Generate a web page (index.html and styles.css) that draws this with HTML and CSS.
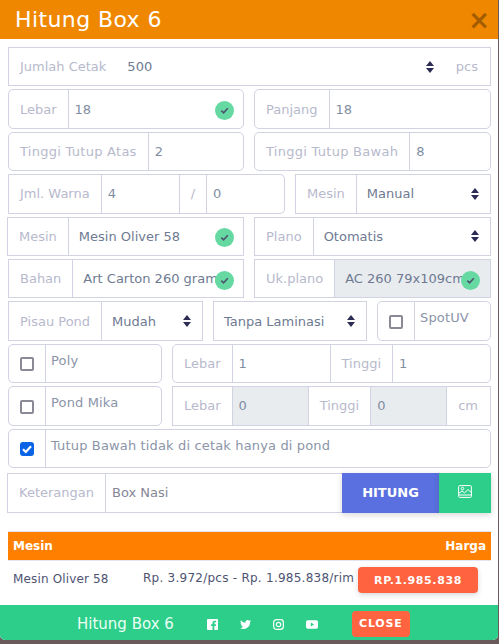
FILE: index.html
```html
<!DOCTYPE html>
<html lang="en">
<head>
  <meta charset="UTF-8">
  <meta name="viewport" content="width=device-width, initial-scale=1.0">
  <title>Hitung Box 6</title>
  <link rel="stylesheet" href="styles.css">
</head>
<body>
  <div class="modal">
    <div class="modal-header">
      <h5 class="modal-title">Hitung Box 6</h5>
      <span class="close-x">&times;</span>
    </div>

    <div class="modal-body">
      <div class="group square">
        <span class="addon flat">Jumlah Cetak</span>
        <div class="field select-field plain">500
          <svg class="updown" viewBox="0 0 8 12"><path d="M4 0 8 5H0zM0 7h8l-4 5z"/></svg>
        </div>
        <span class="addon end flat">pcs</span>
      </div>

      <div class="cols">
        <div class="group">
          <span class="addon">Lebar</span>
          <div class="field num">18
            <span class="ok"><svg viewBox="0 0 12 12"><path d="M2.5 6.2 5 8.6 9.6 3.6"/></svg></span>
          </div>
        </div>
        <div class="group">
          <span class="addon">Panjang</span>
          <div class="field num">18</div>
        </div>
      </div>

      <div class="cols">
        <div class="group">
          <span class="addon long">Tinggi Tutup Atas</span>
          <div class="field num">2</div>
        </div>
        <div class="group">
          <span class="addon long">Tinggi Tutup Bawah</span>
          <div class="field num">8</div>
        </div>
      </div>

      <div class="cols warna-row">
        <div class="group round-end">
          <span class="addon">Jml. Warna</span>
          <div class="field num">4</div>
          <span class="addon slash">/</span>
          <div class="field num">0</div>
        </div>
        <div class="group square">
          <span class="addon">Mesin</span>
          <div class="field select-field">Manual
            <svg class="updown" viewBox="0 0 8 12"><path d="M4 0 8 5H0zM0 7h8l-4 5z"/></svg>
          </div>
        </div>
      </div>

      <div class="cols">
        <div class="group square nudge">
          <span class="addon">Mesin</span>
          <div class="field select-field">Mesin Oliver 58
            <span class="ok"><svg viewBox="0 0 12 12"><path d="M2.5 6.2 5 8.6 9.6 3.6"/></svg></span>
          </div>
        </div>
        <div class="group square">
          <span class="addon">Plano</span>
          <div class="field select-field">Otomatis
            <svg class="updown" viewBox="0 0 8 12"><path d="M4 0 8 5H0zM0 7h8l-4 5z"/></svg>
          </div>
        </div>
      </div>

      <div class="cols">
        <div class="group square">
          <span class="addon">Bahan</span>
          <div class="field select-field">Art Carton 260 gram
            <span class="ok"><svg viewBox="0 0 12 12"><path d="M2.5 6.2 5 8.6 9.6 3.6"/></svg></span>
          </div>
        </div>
        <div class="group square">
          <span class="addon">Uk.plano</span>
          <div class="field select-field disabled">AC 260 79x109cm
            <span class="ok ok-far"><svg viewBox="0 0 12 12"><path d="M2.5 6.2 5 8.6 9.6 3.6"/></svg></span>
          </div>
        </div>
      </div>

      <div class="pisau-row">
        <div class="group square">
          <span class="addon">Pisau Pond</span>
          <div class="field select-field">Mudah
            <svg class="updown" viewBox="0 0 8 12"><path d="M4 0 8 5H0zM0 7h8l-4 5z"/></svg>
          </div>
        </div>
        <div class="group square">
          <div class="field select-field">Tanpa Laminasi
            <svg class="updown" viewBox="0 0 8 12"><path d="M4 0 8 5H0zM0 7h8l-4 5z"/></svg>
          </div>
        </div>
        <div class="group">
          <span class="addon check-cell"><span class="check"></span></span>
          <div class="field check-label">SpotUV</div>
        </div>
      </div>

      <div class="option-row">
        <div class="group">
          <span class="addon check-cell"><span class="check"></span></span>
          <div class="field check-label">Poly</div>
        </div>
        <div class="group">
          <span class="addon">Lebar</span>
          <div class="field num">1</div>
          <span class="addon">Tinggi</span>
          <div class="field num">1</div>
        </div>
      </div>

      <div class="option-row">
        <div class="group">
          <span class="addon check-cell"><span class="check"></span></span>
          <div class="field check-label">Pond Mika</div>
        </div>
        <div class="group square">
          <span class="addon">Lebar</span>
          <div class="field num disabled">0</div>
          <span class="addon">Tinggi</span>
          <div class="field num disabled">0</div>
          <span class="addon end">cm</span>
        </div>
      </div>

      <div class="group">
        <span class="addon check-cell">
          <span class="check checked"><svg viewBox="0 0 12 12"><path d="M2 6.200 4.800 9 10 3.200"/></svg></span>
        </span>
        <div class="field check-label">Tutup Bawah tidak di cetak hanya di pond</div>
      </div>

      <div class="group square note-row nudge">
        <span class="addon">Keterangan</span>
        <div class="field">Box Nasi</div>
        <div class="btn btn-hitung">HITUNG</div>
        <div class="btn btn-image">
          <svg viewBox="0 0 14 13"><rect x=".6" y=".6" width="12.8" height="11.8" rx="1"/><circle cx="4.500" cy="3.600" r="1.300"/><path d="M.6 8.600 4 6l2.600 1.800L10 4.600l3.400 3M.6 10h12.800"/></svg>
        </div>
      </div>

      <table class="result">
        <thead>
          <tr><th>Mesin</th><th class="right" colspan="2">Harga</th></tr>
        </thead>
        <tbody>
          <tr>
            <td class="name">Mesin Oliver 58</td>
            <td class="rate">Rp. 3.972/pcs - Rp. 1.985.838/rim</td>
            <td class="price-cell"><span class="price">RP.1.985.838</span></td>
          </tr>
        </tbody>
      </table>
    </div>

    <div class="modal-footer">
      <span class="footer-title">Hitung Box 6</span>
      <svg class="social" viewBox="0 0 12 12"><path d="M1 0h10a1 1 0 0 1 1 1v10a1 1 0 0 1-1 1H8V7.500h1.600L9.900 5.600H8V4.500c0-.6.2-.9.9-.9h1V1.900H8.600C6.900 1.900 6 2.900 6 4.300v1.300H4.400v1.900H6V12H1a1 1 0 0 1-1-1V1a1 1 0 0 1 1-1z"/></svg>
      <svg class="social" viewBox="0 0 14 12"><path d="M14 1.500c-.5.2-1 .4-1.600.5.600-.4 1-.9 1.200-1.600-.5.300-1.100.6-1.800.7A2.900 2.900 0 0 0 6.900 3.700C4.500 3.600 2.500 2.400 1.100.6c-.8 1.300-.4 3 .9 3.900-.5 0-.9-.1-1.300-.4 0 1.400 1 2.600 2.300 2.900-.4.100-.9.100-1.300 0 .4 1.200 1.500 2 2.700 2A5.800 5.800 0 0 1 .1 10.300 8.200 8.200 0 0 0 12.700 3c.5-.4 1-.9 1.300-1.500z"/></svg>
      <svg class="social insta" viewBox="0 0 12 12"><rect x=".7" y=".7" width="10.600" height="10.600" rx="3"/><circle cx="6" cy="6" r="2.400"/></svg>
      <svg class="social yt" viewBox="0 0 14 10"><path d="M2 0h10a2 2 0 0 1 2 2v6a2 2 0 0 1-2 2H2a2 2 0 0 1-2-2V2a2 2 0 0 1 2-2zm3.600 2.800v4.400L9.400 5z" fill-rule="evenodd"/></svg>
      <span class="btn-close">CLOSE</span>
    </div>
  </div>
</body>
</html>
```

FILE: styles.css
```css
* {
  box-sizing: border-box;
}

body {
  margin: 0;
  background: #6b5a5c;
  font-family: 'DejaVu Sans', Verdana, sans-serif;
  font-size: 13px;
  color: #6e707e;
  overflow: hidden;
}

.modal {
  width: 498px;
  height: 640px;
  background: #fff;
  border-radius: 0 0 5px 5px;
  display: flex;
  flex-direction: column;
}

.modal-header {
  height: 39px;
  background: #f08700;
  display: flex;
  align-items: center;
  justify-content: space-between;
  padding: 0 8px 0 15px;
}

.modal-title {
  margin: 0;
  font-size: 22px;
  font-weight: 400;
  letter-spacing: 0.4px;
  color: #fff;
}

.close-x {
  margin-top: 1px;
  font-size: 26px;
  font-weight: 700;
  line-height: 1;
  color: #a35c00;
}

.modal-body {
  flex: 1;
  padding: 8px 7px 0 8px;
  display: flex;
  flex-direction: column;
  gap: 3px;
}

.group {
  display: flex;
  height: 39.4px;
  flex: none;
  min-width: 0;
  border: 1px solid #d1d3e2;
  border-radius: 5px;
  background: #fff;
}

.group.square {
  border-radius: 0;
}

.group.round-end {
  border-radius: 0 5px 5px 0;
}

.group.nudge {
  margin-left: -1px;
}

.addon {
  display: flex;
  align-items: center;
  padding: 0 11px;
  white-space: nowrap;
  color: #b7b9cc;
  border-right: 1px solid #d1d3e2;
}

.addon.long {
  letter-spacing: 0.27px;
}

.addon.flat {
  border-right: 0;
  border-left: 0;
}

.addon.end {
  border-right: 0;
  padding: 0 12px 0 11px;
}

.field + .addon {
  border-left: 1px solid #d1d3e2;
}

.field + .addon.flat {
  border-left: 0;
  padding-left: 0;
}

.field {
  position: relative;
  flex: 1;
  min-width: 0;
  display: flex;
  align-items: center;
  padding: 0 6px;
  white-space: nowrap;
  color: #858796;
}

.field.plain {
  padding-left: 10px;
}

.num {
  color: #7f8ea3;
}

.select-field {
  padding-left: 10px;
  color: #6e7a92;
}

.disabled {
  background: #e9ecef;
}

.updown {
  position: absolute;
  right: 11px;
  top: 50%;
  width: 8px;
  height: 12px;
  margin-top: -6px;
  fill: #2c2c54;
}

.field.plain .updown {
  right: 22px;
}

.ok {
  position: absolute;
  right: 9px;
  top: 50%;
  width: 19px;
  height: 19px;
  margin-top: -8px;
  border-radius: 50%;
  background: #66d9a3;
  display: flex;
  align-items: center;
  justify-content: center;
}

.ok.ok-far {
  right: 10px;
}

.ok svg {
  width: 11px;
  height: 11px;
  fill: none;
  stroke: #4d5470;
  stroke-width: 1.800;
}

.cols {
  display: grid;
  grid-template-columns: 236px 237px;
  gap: 10px;
}

.warna-row {
  grid-template-columns: 277px 196px;
}

.addon.slash {
  padding: 0 11px;
  flex: none;
}

.pisau-row {
  display: grid;
  grid-template-columns: 195px 154px 114px;
  gap: 10px;
}

.check-cell {
  width: 37px;
  padding: 0;
  justify-content: center;
  flex: none;
}

.check {
  width: 14px;
  height: 14px;
  margin-top: 2px;
  border: 2px solid #8a8a96;
  border-radius: 2px;
  display: flex;
  align-items: center;
  justify-content: center;
}

.check.checked {
  background: #0b63e5;
  border: 0;
  border-radius: 3px;
}

.check svg {
  width: 12px;
  height: 12px;
  fill: none;
  stroke: #fff;
  stroke-width: 2.200;
}

.check-label {
  align-items: flex-start;
  padding: 8px 5px 0;
  letter-spacing: 0.15px;
  color: #8b95a8;
}

.option-row {
  display: grid;
  grid-template-columns: 154px 319px;
  gap: 10px;
}

.note-row {
  height: 40px;
  margin-top: 2px;
  border-right: 0;
}

.btn {
  display: flex;
  align-items: center;
  justify-content: center;
  margin: -1px 0;
  height: 40px;
  color: #fff;
  box-shadow: 0 2px 6px rgba(58, 59, 69, 0.2);
}

.btn-hitung {
  width: 97px;
  background: #5a6fe0;
  font-weight: 700;
  font-size: 13px;
}

.btn-image {
  width: 52px;
  padding-bottom: 2px;
  background: #2dce89;
}

.btn-image svg {
  width: 14px;
  height: 13px;
  fill: none;
  stroke: #fff;
  stroke-width: 1;
}

.result {
  margin-top: 15px;
  width: 100%;
  border-collapse: collapse;
  font-size: 12px;
}

.result th {
  height: 29px;
  padding: 0 5px;
  background: #ff7f00;
  color: #fff;
  text-align: left;
  font-size: 12px;
  font-weight: 700;
  border-top: 1px solid #e3e6f0;
  border-bottom: 1px solid #e3e6f0;
}

.result th.right {
  text-align: right;
}

.result td {
  vertical-align: top;
  color: #4e5372;
  white-space: nowrap;
}

.result td.name {
  width: 135px;
  padding: 11px 0 0 5px;
  letter-spacing: 0.15px;
}

.result td.rate {
  padding: 10px 0 0;
  letter-spacing: 0.25px;
}

.result td.price-cell {
  padding: 6px 13px 0 0;
  text-align: right;
}

.price {
  display: inline-block;
  width: 120px;
  height: 26px;
  line-height: 27px;
  text-align: center;
  background: #ff6340;
  color: #fff;
  font-weight: 700;
  font-size: 11px;
  letter-spacing: 0.6px;
  border-radius: 4px;
  box-shadow: 0 2px 5px rgba(58, 59, 69, 0.2);
}

.modal-footer {
  height: 35px;
  padding: 3px 0 0 77px;
  background: #2dce89;
  border-radius: 0 0 5px 5px;
  display: flex;
  align-items: center;
  color: #fff;
}

.footer-title {
  font-size: 15px;
  margin-right: 33px;
  color: #eafff5;
}

.social {
  width: 11px;
  height: 11px;
  margin-right: 22px;
  fill: #fff;
}

.social.yt {
  width: 12px;
  margin-right: 34px;
}

.social.insta {
  fill: none;
  stroke: #fff;
  stroke-width: 1.300;
}

.btn-close {
  width: 58px;
  height: 26px;
  line-height: 26px;
  text-align: center;
  background: #ff6340;
  border-radius: 4px;
  font-size: 11px;
  font-weight: 700;
  letter-spacing: 0.8px;
  color: #fff;
}
```
